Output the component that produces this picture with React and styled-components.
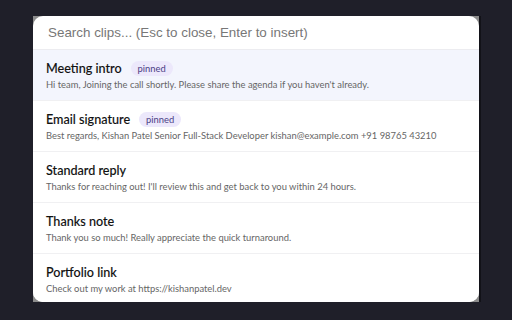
import React from 'react'
import styled, { createGlobalStyle } from 'styled-components'

const GlobalStyle = createGlobalStyle`
  html, body {
    margin: 0;
    padding: 0;
    background: #1f1f29;
  }
  body {
    width: 512px;
    height: 320px;
    overflow: hidden;
  }
`

const Page = styled.div`
  width: 512px;
  height: 320px;
  display: flex;
  justify-content: center;
  padding-top: 16px;
  box-sizing: border-box;
`

const Frame = styled.div`
  width: 446px;
  height: 286px;
  background: #8c8c8c;
  box-shadow: 2px 0 0 #121218;
`

const Panel = styled.div`
  height: 100%;
  background: #fff;
  border-radius: 10px;
  overflow: hidden;
  display: flex;
  flex-direction: column;
`

const SearchInput = styled.input`
  height: 33px;
  flex: none;
  border: none;
  border-bottom: 1px solid #ececf0;
  padding: 0 15px;
  font-family: 'Liberation Sans', Arial, sans-serif;
  font-size: 13.4px;
  color: #333;
  outline: none;
  background: transparent;
  &::placeholder {
    color: #777;
  }
`

const List = styled.ul`
  list-style: none;
  margin: 0;
  padding: 0;
  font-family: Lato, 'Noto Sans', sans-serif;
`

const Item = styled.li`
  height: 51px;
  padding: 10px 13px 0;
  box-sizing: border-box;
  border-bottom: 1px solid #f0f0f2;
  background: ${p => (p.$active ? '#f3f5fd' : '#fff')};
  &:last-child {
    border-bottom: none;
  }
`

const TitleRow = styled.div`
  display: flex;
  align-items: center;
  gap: 9px;
  height: 16px;
`

const Title = styled.span`
  font-size: 12.6px;
  font-weight: 500;
  color: #111;
  -webkit-text-stroke: 0.12px #111;
`

const Badge = styled.span`
  font-size: 9.4px;
  color: #4b3f86;
  background: #ece8fb;
  border-radius: 8px;
  padding: 2px 7px;
  line-height: 11px;
`

const Desc = styled.div`
  margin-top: 3px;
  font-size: 9.4px;
  color: #666;
  white-space: nowrap;
`

const clips = [
  { title: 'Meeting intro', pinned: true, text: "Hi team, Joining the call shortly. Please share the agenda if you haven't already." },
  { title: 'Email signature', pinned: true, text: 'Best regards, Kishan Patel Senior Full-Stack Developer kishan@example.com +91 98765 43210' },
  { title: 'Standard reply', text: "Thanks for reaching out! I'll review this and get back to you within 24 hours." },
  { title: 'Thanks note', text: 'Thank you so much! Really appreciate the quick turnaround.' },
  { title: 'Portfolio link', text: 'Check out my work at https://kishanpatel.dev' },
]

export default function App() {
  return (
    <>
      <GlobalStyle />
      <Page>
        <Frame>
          <Panel>
            <SearchInput placeholder="Search clips... (Esc to close, Enter to insert)" />
            <List>
              {clips.map((c, i) => (
                <Item key={c.title} $active={i === 0}>
                  <TitleRow>
                    <Title>{c.title}</Title>
                    {c.pinned && <Badge>pinned</Badge>}
                  </TitleRow>
                  <Desc>{c.text}</Desc>
                </Item>
              ))}
            </List>
          </Panel>
        </Frame>
      </Page>
    </>
  )
}
